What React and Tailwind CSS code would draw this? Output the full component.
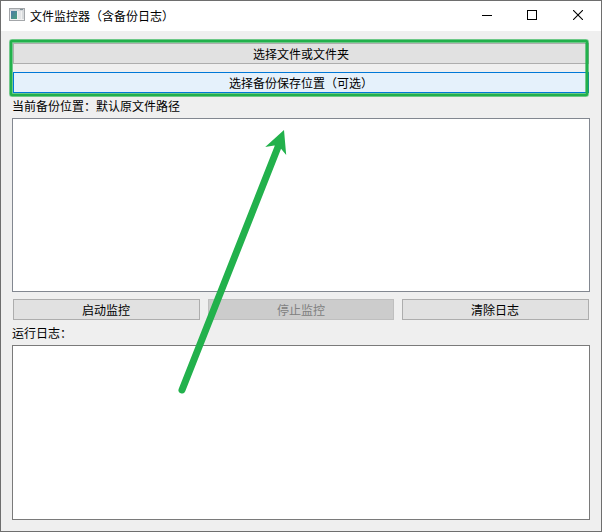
const actions = [
  { label: "启动监控", width: "w-[187px] pr-px" },
  { label: "停止监控", width: "w-[186px]", disabled: true },
  { label: "清除日志", width: "w-[187px] pr-px" },
]

// Desktop colours showing through the window's translucent edge
const edgeMarks = [
  { x: 250, y: 0, w: 22, h: 1, fill: "#67421f" },
  { x: 275, y: 0, w: 1, h: 1, fill: "#45424a" },
  { x: 347, y: 0, w: 1, h: 1, fill: "#45424a" },
  { x: 351, y: 0, w: 10, h: 1, fill: "#302a38" },
  { x: 363, y: 0, w: 25, h: 1, fill: "#1b5520" },
  { x: 0, y: 136, w: 1, h: 1, fill: "#363a52" },
  { x: 0, y: 140, w: 1, h: 5, fill: "#6687a0" },
  { x: 0, y: 265, w: 1, h: 1, fill: "#38363a" },
  { x: 0, y: 270, w: 1, h: 1, fill: "#38363a" },
  { x: 0, y: 290, w: 1, h: 1, fill: "#3a3c48" },
  { x: 0, y: 293, w: 1, h: 1, fill: "#3a3c48" },
  { x: 0, y: 297, w: 1, h: 1, fill: "#3a3c48" },
  { x: 0, y: 379, w: 1, h: 6, fill: "#503e68" },
  { x: 0, y: 385, w: 1, h: 1, fill: "#367c98" },
  { x: 0, y: 414, w: 1, h: 2, fill: "#5b4937" },
  { x: 0, y: 420, w: 1, h: 3, fill: "#665160" },
  { x: 0, y: 444, w: 1, h: 1, fill: "#3a3c48" },
  { x: 0, y: 447, w: 1, h: 1, fill: "#3a3c48" },
  { x: 0, y: 450, w: 1, h: 1, fill: "#3a3c48" },
]

function AppIcon() {
  return (
    <svg width="16" height="14" viewBox="0 0 16 14" className="shrink-0 relative -top-px">
      <defs>
        <linearGradient id="pane" x1="0" y1="0" x2="1" y2="1">
          <stop offset="0" stopColor="#4f79a8" />
          <stop offset="1" stopColor="#49a17c" />
        </linearGradient>
      </defs>
      <rect x="0.5" y="0.5" width="15" height="12" fill="#f1f1f1" stroke="#a3a6a9" />
      <rect x="1" y="1" width="14" height="2" fill="#d3d6da" />
      <rect x="11" y="1" width="3" height="1" fill="#7f9095" />
      <rect x="2" y="3" width="6" height="8" fill="url(#pane)" />
      <rect x="9" y="3" width="3" height="8" fill="#e3e5e7" />
      <rect x="13" y="3" width="2" height="8" fill="#d8dbdd" />
    </svg>
  )
}

function TitleBar() {
  return (
    <header className="h-[30px] shrink-0 bg-white flex items-center pl-2">
      <AppIcon />
      <h1 className="ml-[5px] pb-px text-[12px] leading-[16px] whitespace-nowrap">文件监控器（含备份日志）</h1>
      <div className="ml-auto flex items-center h-full pb-0.5">
        <button className="w-[45px] h-full flex items-center justify-center" aria-label="minimize">
          <svg width="10" height="10" shapeRendering="crispEdges"><path d="M0 5.5H10" stroke="#000" /></svg>
        </button>
        <button className="w-[45px] h-full flex items-center justify-center" aria-label="maximize">
          <svg width="10" height="10" shapeRendering="crispEdges">
            <rect x="0.5" y="0.5" width="9" height="9" fill="none" stroke="#000" />
          </svg>
        </button>
        <button className="w-[47px] h-full flex items-center justify-center pl-px" aria-label="close">
          <svg width="10" height="10"><path d="M0 0L10 10M10 0L0 10" stroke="#000" strokeWidth="1.1" /></svg>
        </button>
      </div>
    </header>
  )
}

// Marker box and arrow drawn over the window
function Annotation() {
  return (
    <svg className="absolute inset-0 pointer-events-none" width="602" height="532">
      {edgeMarks.map(m => (
        <rect key={`${m.x}-${m.y}`} x={m.x} y={m.y} width={m.w} height={m.h} fill={m.fill} />
      ))}
      <rect x="11" y="41" width="576" height="54" rx="1" fill="none" stroke="#22b14c" strokeOpacity="0.5" strokeWidth="4" />
      <rect x="11" y="41" width="576" height="54" rx="1" fill="none" stroke="#22b14c" strokeWidth="2.4" />
      <path d="M182 390L278 147" stroke="#22b14c" strokeWidth="7" strokeLinecap="round" />
      <path d="M284 130L265.2 147L274.2 145.5L280.4 148L286.2 155Z" fill="#22b14c" />
    </svg>
  )
}

export default function App() {
  return (
    <div
      className="relative w-[602px] h-[532px] bg-[#efefef] border border-[#6e6e6e] flex flex-col overflow-hidden text-black text-[12px]"
      style={{ fontFamily: '"Noto Sans CJK SC", sans-serif' }}
    >
      <TitleBar />
      <main className="flex-1 flex flex-col px-[11px] pt-3">
        <button className="mx-px h-[21px] shrink-0 bg-[#e1e1e1] border border-[#adadad] leading-[19px] pb-px">选择文件或文件夹</button>
        <button className="mx-px mt-2 h-[21px] shrink-0 bg-[#e5f1fb] border border-[#0078d7] leading-[19px] pb-px">选择备份保存位置（可选）</button>
        <p className="mt-[5px] h-4 leading-4">当前备份位置：默认原文件路径</p>
        <div className="mt-1 h-[174px] shrink-0 bg-white border border-[#828790]" />
        <div className="mt-[7px] mx-px flex gap-2">
          {actions.map(item => (
            <button
              key={item.label}
              disabled={item.disabled}
              className={`${item.width} h-[21px] border leading-[19px] pb-px ${item.disabled
                ? "bg-[#cccccc] border-[#bfbfbf] text-[#808080]"
                : "bg-[#e1e1e1] border-[#adadad]"
                }`}
            >
              {item.label}
            </button>
          ))}
        </div>
        <p className="mt-[5px] h-4 leading-4">运行日志：</p>
        <div className="mt-1 h-[175px] shrink-0 bg-white border border-[#7a7a7a]" />
      </main>
      <div className="absolute -inset-px">
        <Annotation />
      </div>
    </div>
  )
}
